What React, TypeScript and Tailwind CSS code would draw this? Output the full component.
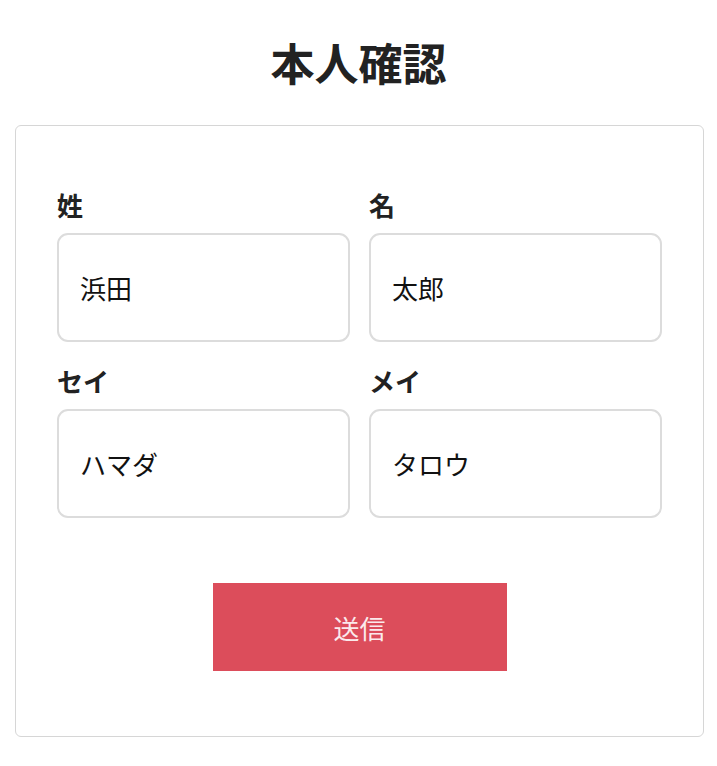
const fields = [
  { label: "姓", value: "浜田" },
  { label: "名", value: "太郎" },
  { label: "セイ", value: "ハマダ" },
  { label: "メイ", value: "タロウ" },
];

export default function App() {
  return (
    <div
      className="min-h-screen bg-white text-[#222] pt-[36px]"
      style={{ fontFamily: '"Noto Sans CJK JP", "Noto Sans", sans-serif' }}
    >
      <h1 className="text-center text-[44px] font-bold leading-[52px]">本人確認</h1>
      <div className="ml-[15px] mt-[37px] w-[689px] rounded-[6px] border-[1.5px] border-[#d6d6d6] px-[41px] pt-[61px] pb-[65px]">
        <div className="grid grid-cols-2 gap-x-[19px] gap-y-[21px]">
          {fields.map((f) => (
            <div key={f.label} className="flex flex-col">
              <label className="text-[26px] font-bold leading-[36px]">{f.label}</label>
              <input
                defaultValue={f.value}
                className="mt-[10px] h-[109px] w-full rounded-[11px] border-2 border-[#dcdcdc] px-[21px] text-[26px] text-[#111] outline-none"
              />
            </div>
          ))}
        </div>
        <div className="mt-[65px] flex justify-center">
          <button className="h-[88px] w-[294px] bg-[#dc4d5b] text-[26px] text-[#fbeaec]">
            送信
          </button>
        </div>
      </div>
    </div>
  );
}
